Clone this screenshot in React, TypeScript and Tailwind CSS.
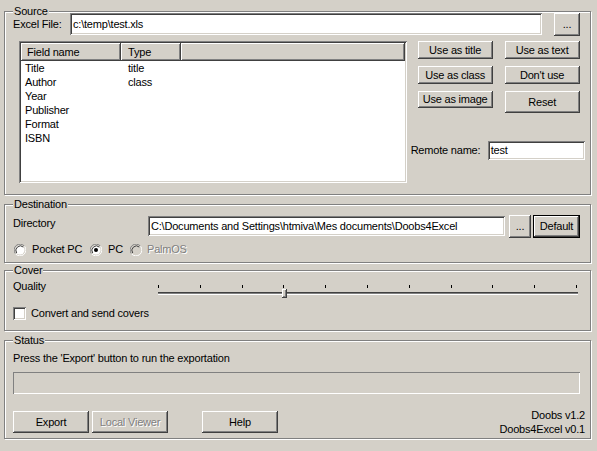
import React from 'react';

const raised =
  'bg-[#d4d0c8] shadow-[inset_-1px_-1px_0_#404040,inset_1px_1px_0_#ffffff,inset_-2px_-2px_0_#808080,inset_2px_2px_0_#d4d0c8]';
const sunken =
  'bg-white shadow-[inset_1px_1px_0_#808080,inset_-1px_-1px_0_#ffffff,inset_2px_2px_0_#404040,inset_-2px_-2px_0_#d4d0c8]';

function Btn({ label, className = '', disabled = false }: { label: string; className?: string; disabled?: boolean }) {
  return (
    <div className={`flex items-center justify-center ${raised} ${className}`}>
      <span className={disabled ? 'text-[#808080] [text-shadow:1px_1px_0_#fff]' : ''}>{label}</span>
    </div>
  );
}

function Field({ value, className = '' }: { value: string; className?: string }) {
  return (
    <div className={`flex items-center pl-[3px] ${sunken} ${className}`}>
      <span className="whitespace-nowrap">{value}</span>
    </div>
  );
}

function Group({ title, className = '', children }: { title: string; className?: string; children: React.ReactNode }) {
  return (
    <div className={`relative border border-[#808080] shadow-[1px_1px_0_#ffffff,inset_1px_1px_0_#ffffff] pl-[8px] pr-[5px] ${className}`}>
      <span className="absolute left-[8px] top-[-7px] bg-[#d4d0c8] px-[1px] leading-[13px]">{title}</span>
      {children}
    </div>
  );
}

function Radio({ checked = false, disabled = false }: { checked?: boolean; disabled?: boolean }) {
  return (
    <svg width="12" height="12" viewBox="0 0 12 12" className="shrink-0">
      <path d="M10.5 2.2 A5.5 5.5 0 0 0 1.5 9.8" fill="none" stroke="#808080" strokeWidth="1" />
      <path d="M1.5 9.8 A5.5 5.5 0 0 0 10.5 2.2" fill="none" stroke="#ffffff" strokeWidth="1" />
      <circle cx="6" cy="6" r="4.5" fill={disabled ? '#d4d0c8' : '#ffffff'} />
      <path d="M9.3 3 A4.5 4.5 0 0 0 2.7 9" fill="none" stroke="#404040" strokeWidth="1" />
      {checked && <circle cx="6" cy="6" r="2" fill="#000" />}
    </svg>
  );
}

const fields = [
  ['Title', 'title'],
  ['Author', 'class'],
  ['Year', ''],
  ['Publisher', ''],
  ['Format', ''],
  ['ISBN', ''],
];

export default function App() {
  const ticks = Array.from({ length: 11 }, (_, i) => i);
  return (
    <div className="w-[597px] h-[451px] bg-[#d4d0c8] pl-[4px] pr-[6px] pt-[11px] flex flex-col text-[11px] leading-[13px] text-black font-['Liberation_Sans',Arial,sans-serif] tracking-[-0.2px] select-none">
      {/* Source */}
      <Group title="Source" className="h-[184px] shrink-0">
        <div className="flex items-start mt-[1px]">
          <div className="w-[57px] h-[22px] flex items-center">Excel File:</div>
          <Field value="c:\temp\test.xls" className="w-[472px] h-[22px]" />
          <Btn label="..." className="ml-[12px] w-[26px] h-[23px]" />
        </div>
        <div className="flex mt-[5px]">
          <div className={`ml-[6px] w-[389px] h-[142px] p-[2px] ${sunken}`}>
            <div className="flex h-[18px]">
              <div className={`w-[100px] pl-[6px] flex items-center ${raised}`}>Field name</div>
              <div className={`w-[60px] pl-[7px] flex items-center ${raised}`}>Type</div>
              <div className={`flex-1 ${raised}`} />
            </div>
            {fields.map(([name, type]) => (
              <div key={name} className="flex h-[14px] items-center">
                <div className="w-[100px] pl-[4px]">{name}</div>
                <div className="pl-[7px]">{type}</div>
              </div>
            ))}
          </div>
          <div className="ml-[4px] w-[175px] flex flex-col">
            <div className="pl-[7px] flex flex-col gap-[7px]">
              <div className="flex gap-[12px]">
                <Btn label="Use as title" className="w-[75px] h-[18px]" />
                <Btn label="Use as text" className="w-[75px] h-[18px]" />
              </div>
              <div className="flex gap-[12px]">
                <Btn label="Use as class" className="w-[75px] h-[18px]" />
                <Btn label="Don't use" className="w-[75px] h-[18px]" />
              </div>
              <div className="flex gap-[12px] items-start">
                <Btn label="Use as image" className="w-[75px] h-[17px]" />
                <Btn label="Reset" className="w-[75px] h-[22px]" />
              </div>
            </div>
            <div className="flex items-center mt-[28px]">
              <div className="w-[77px]">Remote name:</div>
              <Field value="test" className="w-[97px] h-[19px]" />
            </div>
          </div>
        </div>
      </Group>

      {/* Destination */}
      <Group title="Destination" className="h-[59px] mt-[9px] shrink-0">
        <div className="flex items-start mt-[10px]">
          <div className="w-[135px] h-[16px] flex items-center">Directory</div>
          <Field
            value="C:\Documents and Settings\htmiva\Mes documents\Doobs4Excel"
            className="w-[357px] h-[20px] mt-[1px]"
          />
          <Btn label="..." className="ml-[4px] w-[22px] h-[23px]" />
          <div className="ml-[2px] w-[47px] h-[23px] border border-black">
            <Btn label="Default" className="w-full h-full" />
          </div>
        </div>
        <div className="flex items-center mt-[5px] h-[13px]">
          <div className="w-[77px] flex items-center gap-[6px] pl-[1px]">
            <Radio />
            <span>Pocket PC</span>
          </div>
          <div className="w-[40px] flex items-center gap-[6px]">
            <Radio checked />
            <span>PC</span>
          </div>
          <div className="flex items-center gap-[5px]">
            <Radio disabled />
            <span className="text-[#808080] [text-shadow:1px_1px_0_#fff]">PalmOS</span>
          </div>
        </div>
      </Group>

      {/* Cover */}
      <Group title="Cover" className="h-[61px] mt-[7px] shrink-0">
        <div className="flex items-start mt-[9px]">
          <div className="w-[145px] h-[13px] flex items-center">Quality</div>
          <div className="relative w-[420px] h-[24px]">
            {ticks.map((i) => (
              <div
                key={i}
                className="absolute top-[5px] w-[1px] h-[3px] bg-black"
                style={{ left: `${Math.round(i * 41.8)}px` }}
              />
            ))}
            <div className="absolute left-0 right-0 top-[12px] h-[3px] bg-[#808080] border-b border-white shadow-[inset_0_1px_0_#404040]" />
            <div className={`absolute left-[124px] top-[9px] w-[5px] h-[9px] ${raised}`} />
          </div>
        </div>
        <div className="flex items-center mt-[3px]">
          <div className={`w-[13px] h-[13px] ${sunken}`} />
          <span className="ml-[5px]">Convert and send covers</span>
        </div>
      </Group>

      {/* Status */}
      <Group title="Status" className="h-[99px] mt-[9px] shrink-0">
        <div className="mt-[10px] h-[14px] flex items-center">Press the 'Export' button to run the exportation</div>
        <div className="mt-[7px] w-[567px] h-[22px] shadow-[inset_1px_1px_0_#808080,inset_-1px_-1px_0_#ffffff]" />
        <div className="flex items-start mt-[17px]">
          <Btn label="Export" className="w-[76px] h-[22px]" />
          <Btn label="Local Viewer" disabled className="ml-[3px] w-[76px] h-[22px]" />
          <Btn label="Help" className="ml-[34px] w-[76px] h-[22px]" />
          <div className="ml-auto text-right leading-[14px] -mt-[3px]">
            <div>Doobs v1.2</div>
            <div>Doobs4Excel v0.1</div>
          </div>
        </div>
      </Group>
    </div>
  );
}
